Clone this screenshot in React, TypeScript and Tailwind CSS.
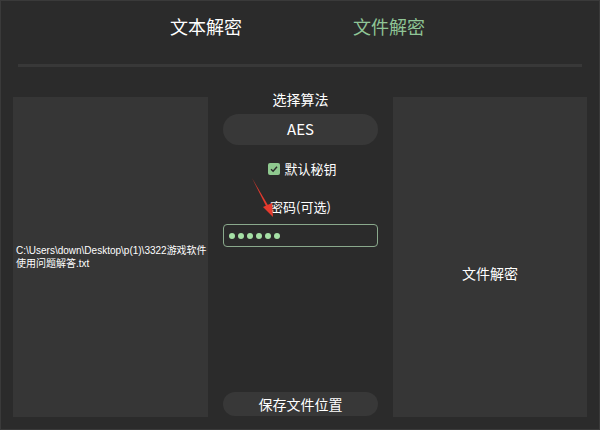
import React from "react";

export default function App() {
  const font = { fontFamily: '"Noto Sans CJK SC", "Noto Sans", sans-serif' };
  return (
    <div
      className="relative w-[600px] h-[430px] bg-[#2b2b2b] border border-[#3a3a3a] overflow-hidden text-[#f0f0f0]"
      style={font}
    >
      {/* header tabs */}
      <div className="flex h-[50px] items-center">
        <span className="ml-[169px] text-[18px] text-white leading-[24px]">文本解密</span>
        <span className="ml-[111px] text-[18px] text-[#8fc596] leading-[24px]">文件解密</span>
      </div>
      {/* divider */}
      <div className="mt-[13px] mx-[17px] h-[3px] bg-[#383838]" />
      {/* main */}
      <div className="flex mt-[22px] pl-[12px] gap-[15px]">
        <div className="mt-[8px] w-[195px] h-[320px] bg-[#363636] flex items-center">
          <p
            className="pl-[3px] text-[10px] leading-[13px] text-white whitespace-nowrap"
            style={{ fontFamily: '"Liberation Sans", "Noto Sans CJK SC", sans-serif' }}
          >
            C:\Users\down\Desktop\p(1)\3322游戏软件
            <br />
            使用问题解答.txt
          </p>
        </div>
        <div className="w-[155px] h-[328px] flex flex-col items-center">
          <div className="text-[14px] leading-[20px] text-white">选择算法</div>
          <div className="mt-[5px] w-[155px] h-[31px] rounded-full bg-[#383838] flex items-center justify-center text-[15px] text-white">
            AES
          </div>
          <div className="mt-[14px] flex items-center gap-[4px] h-[20px] ml-[4px]">
            <span className="w-[12px] h-[12px] rounded-[2px] bg-[#8fc98f] flex items-center justify-center">
              <svg width="10" height="10" viewBox="0 0 10 10">
                <path d="M2 5.2 L4.1 7.2 L8 2.8" fill="none" stroke="#2b2b2b" strokeWidth="1.4" />
              </svg>
            </span>
            <span className="text-[13px] leading-[20px] text-white">默认秘钥</span>
          </div>
          <div className="mt-[18px] text-[13px] leading-[20px] text-white">密码(可选)</div>
          <div className="mt-[7px] w-[155px] h-[23px] rounded-[4px] border border-[#8aa98c] bg-[#2b2b2b] flex items-center pl-[5px] gap-[3px]">
            {[0, 1, 2, 3, 4, 5].map((i) => (
              <span key={i} className="w-[6px] h-[6px] rounded-full bg-[#a5e0a5]" />
            ))}
          </div>
          <div className="mt-auto mb-[1px] w-[155px] h-[24px] rounded-full bg-[#383838] flex items-center justify-center text-[14px] leading-[20px] text-white">
            保存文件位置
          </div>
        </div>
        <div className="mt-[8px] w-[194px] h-[320px] bg-[#363636] flex items-center justify-center pt-[32px]">
          <span className="text-[14px] text-white">文件解密</span>
        </div>
      </div>
      {/* red arrow annotation */}
      <svg className="absolute left-0 top-0 pointer-events-none" width="600" height="430">
        <path d="M251 177 L268 206 L266 207 Z" fill="#e53a2e" />
        <path d="M262 206 L272 216 L271 202 Z" fill="#e53a2e" />
      </svg>
    </div>
  );
}
